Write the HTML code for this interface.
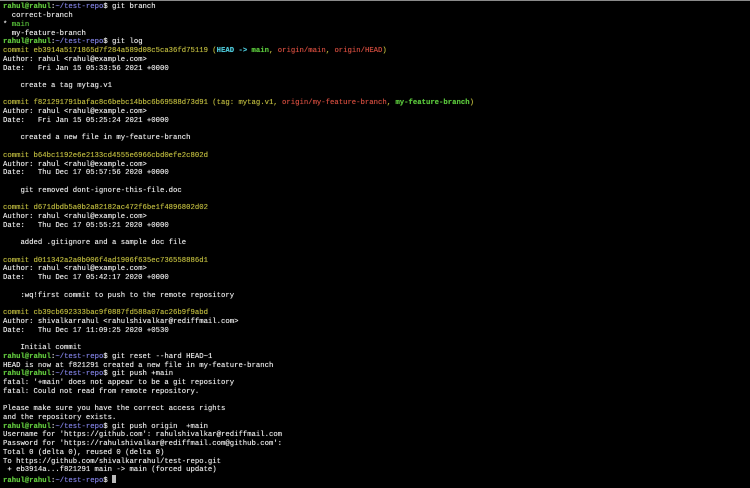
<!DOCTYPE html>
<html><head><meta charset="utf-8"><style>
html,body{margin:0;padding:0;background:#000;width:750px;height:488px;overflow:hidden}
body{border-top:1px solid #8a8a8a;box-sizing:border-box}
pre{margin:0;position:absolute;left:3px;top:3.4px;font-family:"Liberation Mono",monospace;font-size:7.27px;line-height:8.74px;color:#e4e4e4;white-space:pre;text-shadow:0 0 0.4px currentColor}
.g{color:#5fc43c;font-weight:bold}.p{color:#7f7fe0}.y{color:#b8b43c}.c{color:#4cc6d6;font-weight:bold}.gr{color:#58c23a}.r{color:#cc4a3c}.gb{color:#58c23a;font-weight:bold}
.cur{display:inline-block;width:4.4px;height:8px;background:#bbb;vertical-align:-1px}
</style></head><body><pre><span class="g">rahul@rahul</span>:<span class="p">~/test-repo</span>$ git branch
  correct-branch
* <span class="gr">main</span>
  my-feature-branch
<span class="g">rahul@rahul</span>:<span class="p">~/test-repo</span>$ git log
<span class="y">commit eb3914a5171865d7f284a589d08c5ca36fd75119 (</span><span class="c">HEAD -&gt; </span><span class="gb">main</span><span class="y">, </span><span class="r">origin/main</span><span class="y">, </span><span class="r">origin/HEAD</span><span class="y">)</span>
Author: rahul &lt;rahul@example.com&gt;
Date:   Fri Jan 15 05:33:56 2021 +0000

    create a tag mytag.v1

<span class="y">commit f821291791bafac8c6bebc14bbc6b69588d73d91 (tag: mytag.v1, </span><span class="r">origin/my-feature-branch</span><span class="y">, </span><span class="gb">my-feature-branch</span><span class="y">)</span>
Author: rahul &lt;rahul@example.com&gt;
Date:   Fri Jan 15 05:25:24 2021 +0000

    created a new file in my-feature-branch

<span class="y">commit b64bc1192e6e2133cd4555e6966cbd0efe2c802d</span>
Author: rahul &lt;rahul@example.com&gt;
Date:   Thu Dec 17 05:57:56 2020 +0000

    git removed dont-ignore-this-file.doc

<span class="y">commit d671dbdb5a0b2a82182ac472f6be1f4896802d02</span>
Author: rahul &lt;rahul@example.com&gt;
Date:   Thu Dec 17 05:55:21 2020 +0000

    added .gitignore and a sample doc file

<span class="y">commit d011342a2a0b006f4ad1906f635ec736558886d1</span>
Author: rahul &lt;rahul@example.com&gt;
Date:   Thu Dec 17 05:42:17 2020 +0000

    :wq!first commit to push to the remote repository

<span class="y">commit cb39cb692333bac9f0887fd588a07ac26b9f9abd</span>
Author: shivalkarrahul &lt;rahulshivalkar@rediffmail.com&gt;
Date:   Thu Dec 17 11:09:25 2020 +0530

    Initial commit
<span class="g">rahul@rahul</span>:<span class="p">~/test-repo</span>$ git reset --hard HEAD~1
HEAD is now at f821291 created a new file in my-feature-branch
<span class="g">rahul@rahul</span>:<span class="p">~/test-repo</span>$ git push +main
fatal: '+main' does not appear to be a git repository
fatal: Could not read from remote repository.

Please make sure you have the correct access rights
and the repository exists.
<span class="g">rahul@rahul</span>:<span class="p">~/test-repo</span>$ git push origin  +main
Username for 'https://github.com': rahulshivalkar@rediffmail.com
Password for 'https://rahulshivalkar@rediffmail.com@github.com':
Total 0 (delta 0), reused 0 (delta 0)
To https://github.com/shivalkarrahul/test-repo.git
 + eb3914a...f821291 main -&gt; main (forced update)
<span class="g">rahul@rahul</span>:<span class="p">~/test-repo</span>$ <span class="cur"></span></pre></body></html>
